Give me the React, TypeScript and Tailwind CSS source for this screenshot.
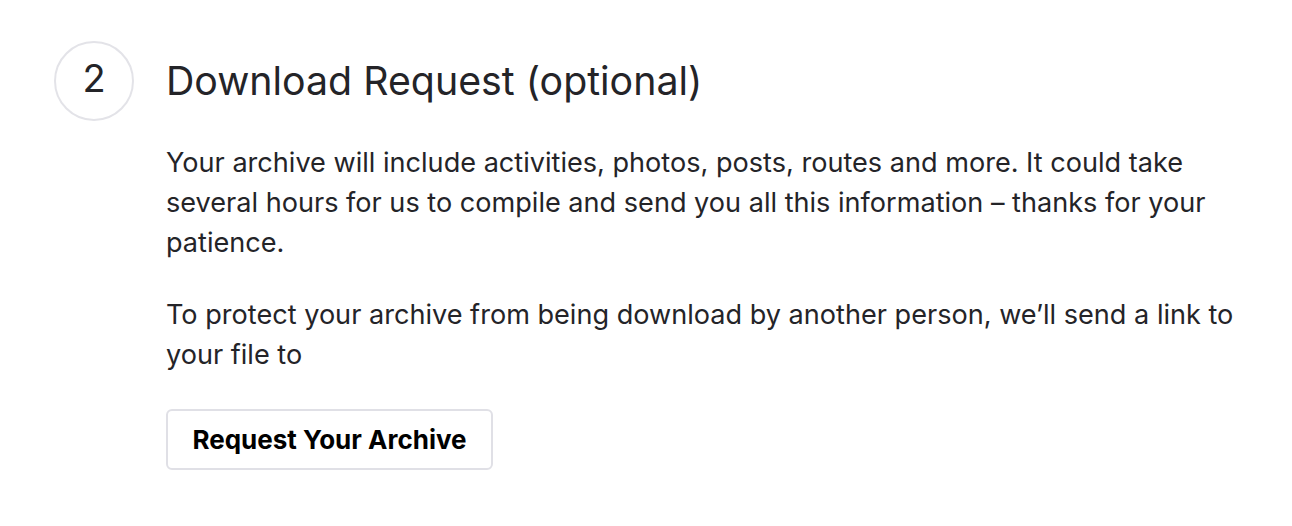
export default function App() {
  return (
    <div
      className="min-h-screen bg-white text-[#242428]"
      style={{ fontFamily: "Inter, 'Noto Sans', sans-serif" }}
    >
      <div className="flex pl-[54px] pt-[41px]">
        <div className="flex h-[80px] w-[80px] shrink-0 items-center justify-center rounded-full border-2 border-[#e3e3e8] pb-[6px] text-[38px]">
          2
        </div>
        <div className="ml-[32px] w-[1080px]">
          <h2 className="flex h-[80px] items-center text-[39.3px] font-normal">
            Download Request (optional)
          </h2>
          <p className="mt-[22px] text-[27.1px] leading-[40px]">
            Your archive will include activities, photos, posts, routes and more. It could take several hours for us
            to compile and send you all this information – thanks for your patience.
          </p>
          <p className="mt-[32px] text-[27.1px] leading-[40px]">
            To protect your archive from being download by another person, we’ll send a link to your file to
          </p>
          <button className="mt-[34px] h-[61px] w-[327px] rounded-md border-2 border-[#e0e0e6] bg-white text-[26px] font-bold text-black">
            Request Your Archive
          </button>
        </div>
      </div>
    </div>
  );
}
